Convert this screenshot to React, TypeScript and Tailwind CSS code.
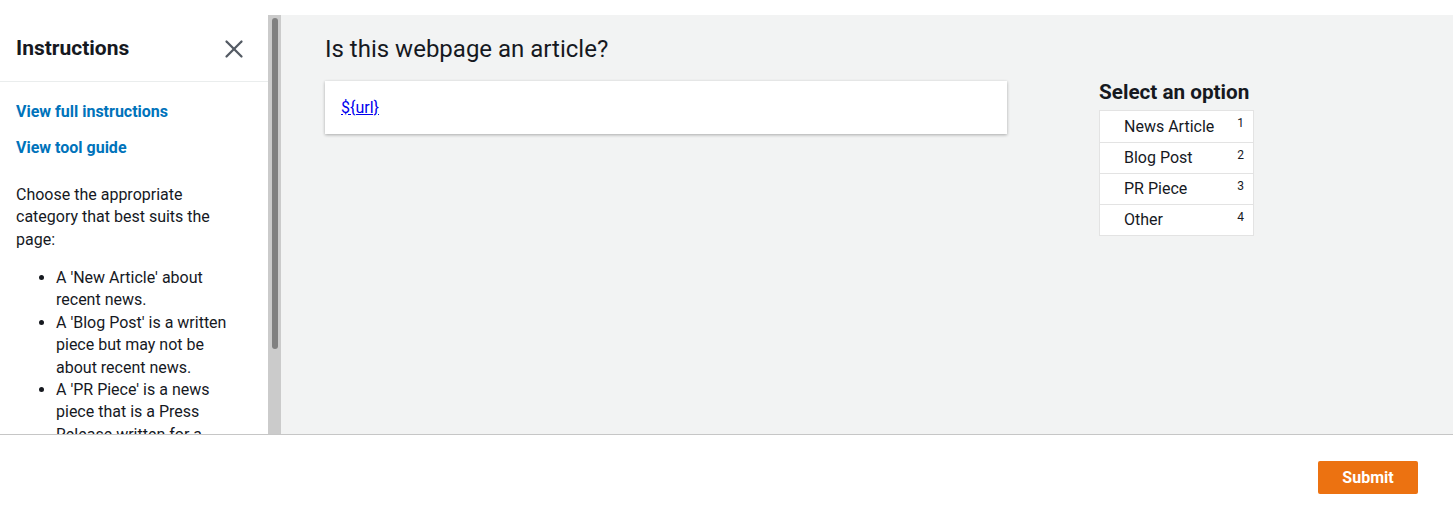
import { X } from "lucide-react";

const options = ["News Article", "Blog Post", "PR Piece", "Other"];

const bullets = [
  "A 'New Article' about recent news.",
  "A 'Blog Post' is a written piece but may not be about recent news.",
  "A 'PR Piece' is a news piece that is a Press Release written for a company.",
];

function Sidebar() {
  return (
    <aside className="flex w-[281px] shrink-0 bg-white">
      <div className="w-[268px] overflow-hidden">
        <div className="flex h-[67px] items-center justify-between border-b border-[#eaeded] pl-4 pr-[19px] pt-[2px]">
          <h2 className="text-[21px] font-bold text-[#16191f]">Instructions</h2>
          <X className="h-[30px] w-[30px] text-[#545b64]" strokeWidth={1.8} />
        </div>
        <div className="px-4 pt-[19px] text-[16px] leading-[22.4px] text-[#16191f]">
          <a className="block font-bold text-[#0073bb]" href="#">View full instructions</a>
          <a className="mt-[14px] block font-bold text-[#0073bb]" href="#">View tool guide</a>
          <p className="mt-[24px] pr-6">Choose the appropriate category that best suits the page:</p>
          <ul className="mt-4 list-disc pl-10 pr-6">
            {bullets.map((b) => (
              <li key={b}>{b}</li>
            ))}
          </ul>
        </div>
      </div>
      <div className="flex w-[13px] justify-center bg-[#cbcbcb] pt-[3px]">
        <div className="h-[331px] w-[6px] rounded-full bg-[#808080]" />
      </div>
    </aside>
  );
}

export default function App() {
  return (
    <div className="flex h-[530px] flex-col bg-white font-['Roboto',sans-serif] text-[#16191f]">
      <div className="flex h-[434px] pt-[15px]">
        <Sidebar />
        <main className="flex flex-1 bg-[#f2f3f3] pl-11">
          <div className="w-[682px]">
            <h1 className="mt-[20px] text-[24px] leading-[28px]">Is this webpage an article?</h1>
            <div className="mt-[18px] flex h-[53px] items-center bg-white px-4 shadow-[0_1px_3px_rgba(0,0,0,0.3)]">
              <a href="#" className="text-[16px] text-[#0000ee] underline">${"{url}"}</a>
            </div>
          </div>
          <div className="ml-[92px] pt-[65px]">
            <h3 className="text-[20.7px] font-bold leading-6">Select an option</h3>
            <div className="mt-[6px] w-[155px] border border-[#e3e3e3] bg-white">
              {options.map((o, i) => (
                <div
                  key={o}
                  className="relative flex h-[31px] items-center border-t border-[#e3e3e3] pl-6 text-[16px] first:border-t-0"
                >
                  {o}
                  <span className="absolute right-[9px] top-[3px] text-[12px]">{i + 1}</span>
                </div>
              ))}
            </div>
          </div>
        </main>
      </div>
      <footer className="flex flex-1 items-start justify-end border-t border-[#c6c6c6] pr-[35px] pt-[26px]">
        <button className="h-[33px] w-[100px] rounded-[2px] bg-[#ec7211] text-[16px] font-bold text-white">
          Submit
        </button>
      </footer>
    </div>
  );
}
